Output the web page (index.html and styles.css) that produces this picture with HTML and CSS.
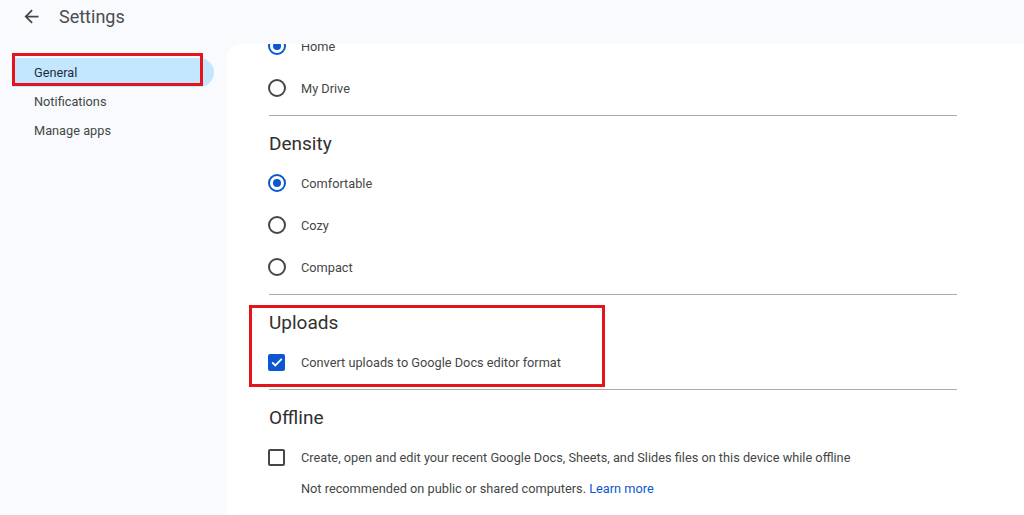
FILE: index.html
```html
<!DOCTYPE html>
<html lang="en">
<head>
    <meta charset="UTF-8">
    <meta name="viewport" content="width=device-width, initial-scale=1.0">
    <title>Settings</title>
    <link rel="stylesheet" href="styles.css">
</head>
<body>
    <header class="topbar">
        <span class="back">
            <svg viewBox="0 0 24 24" width="21" height="21"><path d="M20 11H7.83l5.59-5.59L12 4l-8 8 8 8 1.41-1.41L7.83 13H20v-2z" fill="#444746"/></svg>
        </span>
        <span class="page-title">Settings</span>
    </header>
    <div class="main">
        <nav class="sidebar">
            <div class="nav-item active">General<span class="mark mark-nav"></span></div>
            <div class="nav-item">Notifications</div>
            <div class="nav-item">Manage apps</div>
        </nav>
        <div class="panel">
            <div class="content">
                <section class="group first">
                    <div class="option"><span class="radio on"></span>Home</div>
                    <div class="option"><span class="radio"></span>My Drive</div>
                </section>
                <section class="group">
                    <h2>Density</h2>
                    <div class="option"><span class="radio on"></span>Comfortable</div>
                    <div class="option"><span class="radio"></span>Cozy</div>
                    <div class="option"><span class="radio"></span>Compact</div>
                </section>
                <section class="group uploads">
                    <span class="mark mark-uploads"></span>
                    <h2>Uploads</h2>
                    <div class="option"><span class="check on">
                        <svg viewBox="0 0 18 18" width="18" height="18"><path d="M4.2 9.3l3.1 3.1 6.5-6.6" fill="none" stroke="#fff" stroke-width="1.8"/></svg>
                    </span>Convert uploads to Google Docs editor format</div>
                </section>
                <section class="group last">
                    <h2>Offline</h2>
                    <div class="option"><span class="check"></span>Create, open and edit your recent Google Docs, Sheets, and Slides files on this device while offline</div>
                    <p class="note">Not recommended on public or shared computers. <a href="#">Learn more</a></p>
                </section>
            </div>
        </div>
    </div>
</body>
</html>
```

FILE: styles.css
```css
body {
    margin: 0;
    padding: 0;
    font-family: Roboto, "Liberation Sans", Arial, sans-serif;
    background-color: #f8fafd;
    color: #444746;
    height: 515px;
    overflow: hidden;
}

.topbar {
    height: 44px;
    display: flex;
    align-items: center;
    padding-left: 21px;
    box-sizing: border-box;
    padding-bottom: 12px;
}

.back {
    display: flex;
    width: 21px;
    height: 21px;
}

.page-title {
    margin-left: 17px;
    font-size: 18px;
    color: #4a4d4c;
}

.main {
    display: flex;
    height: 471px;
}

.sidebar {
    width: 214px;
    padding-top: 14px;
    padding-left: 13px;
    box-sizing: border-box;
    flex-shrink: 0;
    margin-right: 13px;
}

.nav-item {
    position: relative;
    height: 29px;
    display: flex;
    align-items: center;
    padding-left: 21px;
    font-size: 12.75px;
    color: #444746;
    border-radius: 0 15px 15px 0;
}

.nav-item.active {
    background-color: #c2e7ff;
    color: #1f2d3d;
}

.mark {
    position: absolute;
    border: 3px solid #e3141b;
    box-sizing: border-box;
}

.mark-nav {
    left: -1px;
    top: -5px;
    width: 191px;
    height: 33px;
}

.panel {
    flex: 1;
    background-color: #fff;
    border-radius: 14px 0 0 0;
    overflow: hidden;
    padding-left: 42px;
}

.content {
    width: 688px;
    margin-top: -19px;
}

.group {
    border-bottom: 1px solid #acacac;
    padding-top: 16px;
    padding-bottom: 6px;
}

.group.first {
    padding-top: 0;
}

.group.last {
    border-bottom: 0;
}

.uploads {
    position: relative;
}

.mark-uploads {
    left: -20px;
    top: 10px;
    width: 356px;
    height: 82px;
}

h2 {
    margin: 0 0 6px 0;
    font-size: 19px;
    font-weight: 400;
    line-height: 24px;
    color: #303030;
}

.option {
    height: 42px;
    display: flex;
    align-items: center;
    font-size: 12.75px;
    color: #444746;
}

.radio {
    width: 18px;
    height: 18px;
    border: 2px solid #444746;
    border-radius: 50%;
    box-sizing: border-box;
    margin-right: 15px;
    margin-left: -1px;
    display: flex;
    align-items: center;
    justify-content: center;
    flex-shrink: 0;
}

.radio.on {
    border-color: #0b57d0;
}

.radio.on::after {
    content: "";
    width: 8px;
    height: 8px;
    border-radius: 50%;
    background-color: #0b57d0;
}

.check {
    width: 17px;
    height: 17px;
    border: 2px solid #444746;
    border-radius: 2px;
    box-sizing: border-box;
    margin-right: 16px;
    margin-left: -1px;
    display: flex;
    align-items: center;
    justify-content: center;
    flex-shrink: 0;
}

.check.on {
    background-color: #0b57d0;
    border-color: #0b57d0;
}

.check svg {
    flex-shrink: 0;
}

.note {
    margin: 0 0 0 32px;
    font-size: 12.75px;
    line-height: 22px;
    color: #444746;
}

.note a {
    color: #0b57d0;
    text-decoration: none;
}
```
